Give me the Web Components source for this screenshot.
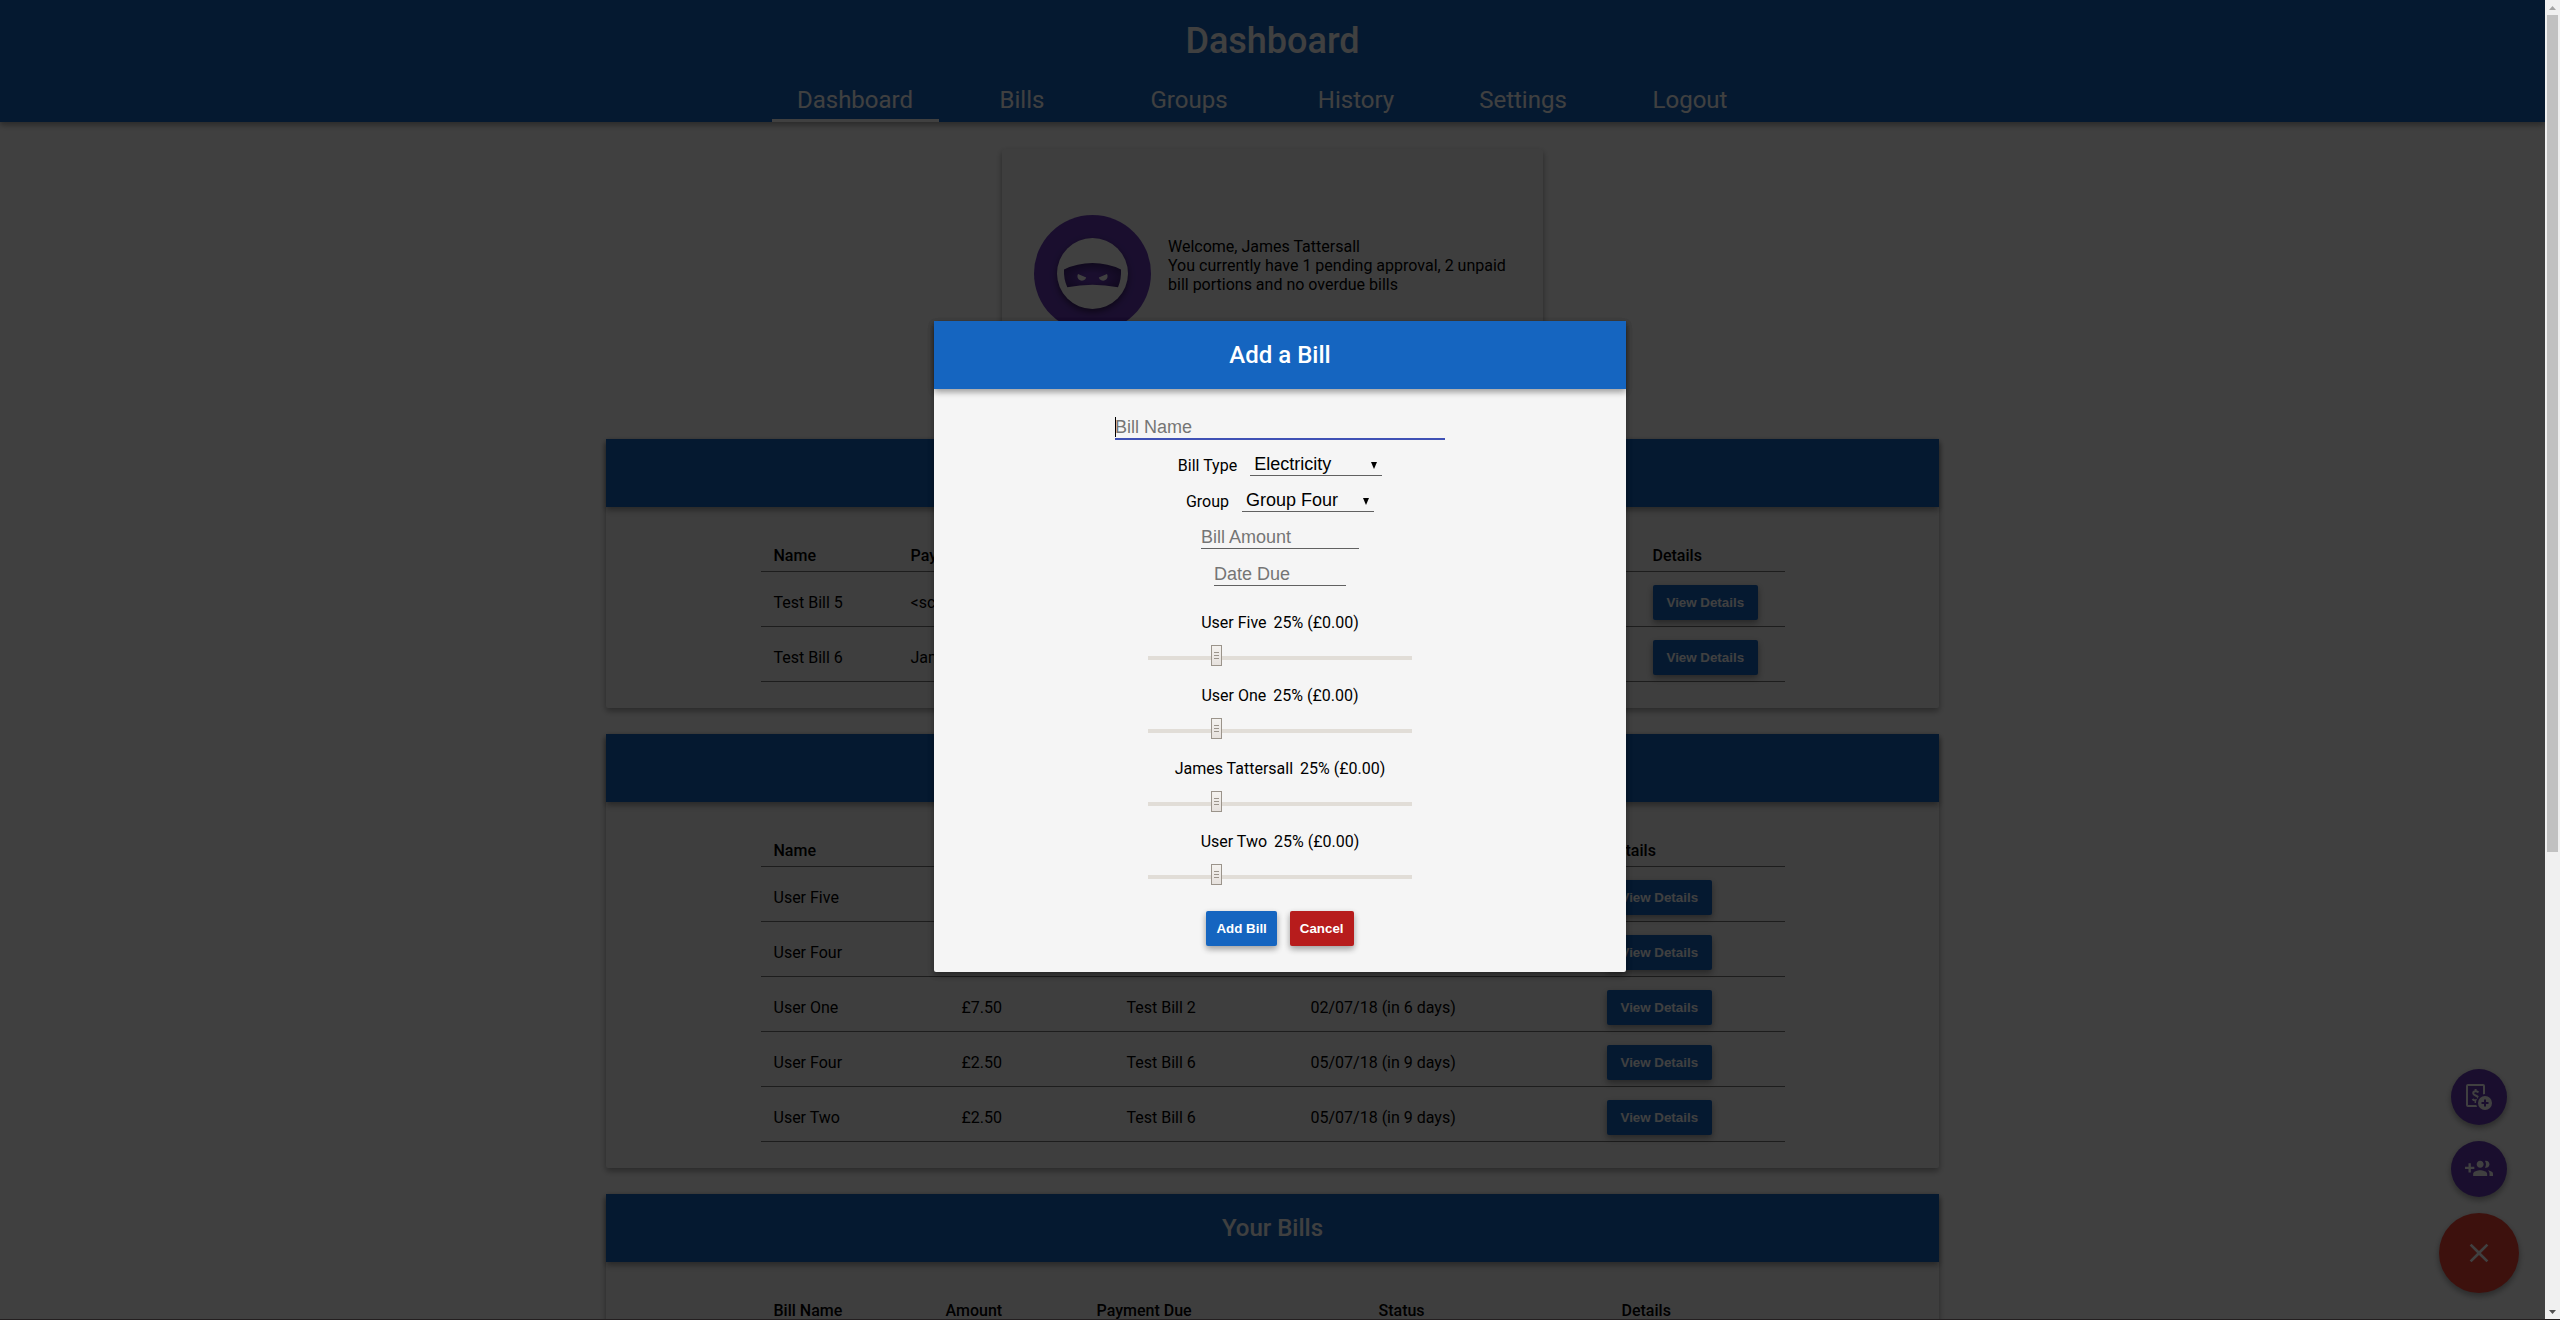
<!DOCTYPE html>
<html lang="en">
<head>
<meta charset="utf-8">
<title>Dashboard</title>
<style>
  body { margin: 0; background: #fff; color: #000; font: 16px/19px Roboto, sans-serif; }
</style>
</head>
<body>
<bill-app></bill-app>

<script>
const SHADOW = '0 3px 6px rgba(0,0,0,.16), 0 3px 6px rgba(0,0,0,.23)';
const BASE = `*, *::before, *::after { box-sizing: border-box; }`;

class Base extends HTMLElement {
  connectedCallback() {
    if (this.shadowRoot) return;
    this.attachShadow({ mode: 'open' }).innerHTML = `<style>${BASE}${this.css()}</style>${this.html()}`;
  }
  css() { return ''; }
  html() { return '<slot></slot>'; }
}

/* Top bar with title and navigation */
customElements.define('app-header', class extends Base {
  css() { return `
    :host { display: flex; flex-direction: column; align-items: center; gap: 24px; padding-top: 20px;
      background: #1565c0; color: #fff; box-shadow: ${SHADOW}; }
    h1 { margin: 0; font-size: 36px; line-height: 42px; font-weight: 500; }
    nav { display: flex; }
    a { width: 167px; padding-bottom: 5px; border-bottom: 3px solid transparent; color: inherit;
      font-size: 24px; line-height: 28px; text-align: center; text-decoration: none; }
    a[aria-current] { border-color: #fff; }`; }
  html() {
    const links = ['Dashboard', 'Bills', 'Groups', 'History', 'Settings', 'Logout'];
    return `<h1>Dashboard</h1><nav>${links.map((l, i) =>
      `<a href="#"${i ? '' : ' aria-current="page"'}>${l}</a>`).join('')}</nav>`;
  }
});

/* Greeting card */
customElements.define('welcome-card', class extends Base {
  css() { return `
    :host { display: flex; align-items: center; gap: 17px; width: 541px; max-width: 100%; padding: 66px 32px;
      background: #f5f5f5; border-radius: 2px; box-shadow: ${SHADOW}; }
    svg { flex: none; width: 117px; height: 117px; }
    .face { filter: drop-shadow(0 3px 3px rgba(0,0,0,.5)); }
    .text { padding-bottom: 16px; }`; }
  html() { return `
    <svg viewBox="0 0 117 117" aria-hidden="true">
      <defs><radialGradient id="m" cx=".5" cy=".6" r=".6"><stop offset=".3" stop-color="#673ab7"/><stop offset="1" stop-color="#3f2375"/></radialGradient></defs>
      <circle cx="58.5" cy="58.5" r="58.5" fill="#673ab7"/>
      <circle class="face" cx="58.5" cy="58.5" r="35.5" fill="#fff"/>
      <path d="M30 54.5Q43 48 58.5 48T87 54.5Q87.500 64 84 72.200Q71 69.700 58.500 69.700T33.300 72.200Q29.500 64 30 54.500Z" fill="url(#m)"/>
      <path d="M44 59L52.200 62.600A4.500 4.500 0 1 1 44 59ZM73 59L64.800 62.600A4.500 4.500 0 1 0 73 59Z" fill="#fff"/>
    </svg>
    <div class="text"><slot></slot></div>`; }
});

/* Titled card */
customElements.define('info-card', class extends Base {
  css() { return `
    :host { display: block; background: #f5f5f5; border-radius: 2px; box-shadow: ${SHADOW}; }
    h2 { margin: 0; height: 68px; background: #1565c0; color: #fff; box-shadow: ${SHADOW};
      font-size: 24px; line-height: 68px; font-weight: 500; text-align: center; }
    .body { display: flex; justify-content: center; padding: 25px 26px 26px; }`; }
  html() { return `<h2>${this.getAttribute('heading') || ''}</h2><div class="body"><slot></slot></div>`; }
});

/* Ruled table; the last column of each row holds a button */
const TABLES = {
  approvals: {
    widths: [150, 180, 180, 180, 202, 132],
    head: ['Name', 'Payee', '', '', '', 'Details'],
    rows: [['Test Bill 5', '&lt;script&gt;', '', '', ''], ['Test Bill 6', 'James', '', '', '']]
  },
  owed: {
    widths: [201, 165, 184, 296, 178],
    head: ['Name', '', '', '', 'Details'],
    rows: [['User Five', '', '', ''], ['User Four', '', '', ''],
      ['User One', '£7.50', 'Test Bill 2', '02/07/18 (in 6 days)'],
      ['User Four', '£2.50', 'Test Bill 6', '05/07/18 (in 9 days)'],
      ['User Two', '£2.50', 'Test Bill 6', '05/07/18 (in 9 days)']]
  },
  bills: {
    widths: [185, 151, 282, 243, 163],
    head: ['Bill Name', 'Amount', 'Payment Due', 'Status', 'Details'],
    rows: []
  }
};
customElements.define('bill-table', class extends Base {
  css() { return `
    :host { display: block; width: 100%; max-width: 1024px; }
    table { width: 100%; border-collapse: separate; border-spacing: 0; table-layout: fixed; }
    th, td { text-align: left; border-bottom: 1px solid #757575; padding: 13px 0 6px; white-space: nowrap; }
    th { height: 40px; font-weight: 500; vertical-align: bottom; }
    td { height: 55px; vertical-align: middle; }
    th:first-child, td:first-child { padding-left: 13px; }`; }
  html() {
    const t = TABLES[this.getAttribute('data')];
    const total = t.widths.reduce((a, b) => a + b);
    return `<table><colgroup>${t.widths.map(w => `<col style="width:calc(100% * ${w} / ${total})">`).join('')}</colgroup>
      <thead><tr>${t.head.map(h => `<th>${h}</th>`).join('')}</tr></thead>
      <tbody>${t.rows.map(r => `<tr>${r.map(c => `<td>${c}</td>`).join('')}<td><bill-button wide>View Details</bill-button></td></tr>`).join('')}</tbody></table>`;
  }
});

customElements.define('bill-button', class extends Base {
  css() { return `
    :host { display: block; }
    button { display: block; height: 35px; padding: 0 10px; border: 0; border-radius: 2px; background: #1565c0;
      color: #fff; font-family: "Liberation Sans", Arial, sans-serif; font-weight: bold; box-shadow: ${SHADOW}; }
    :host([wide]) button { padding: 0 14px; }
    :host([danger]) button { background: #b71c1c; }`; }
  html() { return `<button type="button"><slot></slot></button>`; }
});

/* Floating action buttons */
customElements.define('fab-stack', class extends Base {
  css() { return `
    :host { position: absolute; right: 26px; bottom: 26px; display: flex; flex-direction: column; align-items: center; gap: 16px; }
    button { display: grid; place-items: center; width: 56px; height: 56px; padding: 0; border: 0; border-radius: 50%;
      background: #673ab7; box-shadow: ${SHADOW}; }
    button.main { width: 80px; height: 80px; background: #f44336; }
    svg { width: 28px; height: 28px; fill: #fff; }
    .main svg { width: 32px; height: 32px; }`; }
  html() { return `
    <button type="button" aria-label="Add bill"><svg viewBox="0 0 28 28">
      <rect x="2" y="2" width="17" height="21" rx="1" fill="none" stroke="#fff" stroke-width="2"/>
      <path d="M13.300 9.500C12.600 7.800 8.200 7.600 8.200 10.200C8.200 13 13.200 12 13.200 15.200C13.200 18 8.400 17.800 7.700 15.800M10.600 6V8M10.600 17.500V20" fill="none" stroke="#fff" stroke-width="2"/>
      <circle cx="20" cy="20" r="9" fill="#673ab7"/><circle cx="20" cy="20" r="7"/>
      <path d="M20 16.500V23.500M16.500 20H23.500" stroke="#673ab7" stroke-width="2"/></svg></button>
    <button type="button" aria-label="Add group"><svg viewBox="0 0 24 24"><path d="M8 10H5V7H3v3H0v2h3v3h2v-3h3v-2zm10 1c1.660 0 2.990-1.340 2.990-3S19.660 5 18 5c-.320 0-.630.050-.910.140.570.810.900 1.790.900 2.860s-.340 2.040-.900 2.860c.280.090.590.140.910.140zm-5 0c1.660 0 2.990-1.340 2.990-3S14.660 5 13 5c-1.660 0-3 1.340-3 3s1.340 3 3 3zm6.620 2.160c.830.730 1.380 1.660 1.380 2.840v2h3v-2c0-1.540-2.370-2.490-4.380-2.840zM13 13c-2 0-6 1-6 3v2h12v-2c0-2-4-3-6-3z"/></svg></button>
    <button type="button" class="main" aria-label="Close"><svg viewBox="0 0 24 24"><path d="M19 6.410L17.590 5 12 10.590 6.410 5 5 6.410 10.590 12 5 17.590 6.410 19 12 13.410 17.590 19 19 17.590 13.410 12z"/></svg></button>`; }
});

/* One share slider */
customElements.define('share-slider', class extends Base {
  css() { return `
    :host { display: flex; flex-direction: column; align-items: center; gap: 13px; }
    .label { display: flex; gap: 7px; }
    input { appearance: none; display: block; width: 264px; height: 21px; margin: 0; background: none; }
    input::-webkit-slider-runnable-track { height: 21px;
      background: linear-gradient(#e1ddd7, #e1ddd7) no-repeat 0 11px / 100% 4px; }
    input::-webkit-slider-thumb { appearance: none; width: 11px; height: 21px; border: 1px solid #9b948b;
      background:
        linear-gradient(#9b948b, #9b948b) no-repeat 2px 6px / 5px 1px,
        linear-gradient(#9b948b, #9b948b) no-repeat 2px 9px / 5px 1px,
        linear-gradient(#9b948b, #9b948b) no-repeat 2px 12px / 5px 1px,
        linear-gradient(#f4f2ef, #e6e1dd); }`; }
  html() { return `<div class="label"><label for="r">${this.getAttribute('name')}</label><output for="r">25% (£0.00)</output></div>
    <input id="r" type="range" min="0" max="100" value="25">`; }
});

/* Labelled drop-down */
customElements.define('select-field', class extends Base {
  css() { return `
    :host { display: flex; align-items: center; gap: 13px; height: 22px; }
    .box { display: grid; align-items: center; width: 132px; }
    select, svg { grid-area: 1 / 1; }
    select { appearance: none; width: 100%; height: 22px; padding: 0 4px; border: 0; border-bottom: 1px solid #616161;
      border-radius: 0; background: none; color: #000; font: 18px/21px "Liberation Sans", Arial, sans-serif; }
    svg { justify-self: end; width: 6px; height: 7px; margin-right: 5px; pointer-events: none; }`; }
  html() { return `<label for="s">${this.getAttribute('label')}</label>
    <div class="box"><select id="s"><option>${this.getAttribute('value')}</option></select>
    <svg viewBox="0 0 6 7"><path d="M0 0H6L3 7Z"/></svg></div>`; }
});

/* Modal */
customElements.define('add-bill-dialog', class extends Base {
  css() { return `
    :host { display: block; width: 692px; max-width: 100%; background: #f5f5f5; border-radius: 2px;
      box-shadow: ${SHADOW}; }
    h2 { margin: 0; height: 68px; background: #1565c0; color: #fff; box-shadow: ${SHADOW};
      font-size: 24px; line-height: 68px; font-weight: 500; text-align: center; }
    form { display: flex; flex-direction: column; align-items: center; padding: 28px 26px 26px; }
    .fields { display: flex; flex-direction: column; align-items: center; gap: 14px; }
    .shares { display: flex; flex-direction: column; gap: 20px; padding: 27px 0 26px; }
    .actions { display: flex; gap: 13px; }
    input { width: 132px; height: 23px; padding: 0; border: 0; border-bottom: 1px solid #616161; outline: 0;
      background: none; font: 18px/21px "Liberation Sans", Arial, sans-serif; }
    input::placeholder { color: #757575; }
    .amount { width: 158px; }
    .name { width: 330px; border-bottom: 2px solid #3f51b5; caret-color: transparent;
      background: linear-gradient(#000, #000) no-repeat 0 0 / 1px 20px; }`; }
  html() { return `<h2>Add a Bill</h2>
    <form>
      <div class="fields">
        <input class="name" type="text" placeholder="Bill Name" aria-label="Bill Name">
        <select-field label="Bill Type" value="Electricity"></select-field>
        <select-field label="Group" value="Group Four"></select-field>
        <input class="amount" type="text" inputmode="decimal" placeholder="Bill Amount" aria-label="Bill Amount">
        <input type="text" placeholder="Date Due" aria-label="Date Due">
      </div>
      <div class="shares">
        <share-slider name="User Five"></share-slider>
        <share-slider name="User One"></share-slider>
        <share-slider name="James Tattersall"></share-slider>
        <share-slider name="User Two"></share-slider>
      </div>
      <div class="actions"><bill-button>Add Bill</bill-button><bill-button danger>Cancel</bill-button></div>
    </form>`; }
});

/* Scrollbar gutter */
customElements.define('scroll-gutter', class extends Base {
  css() { return `
    :host { display: grid; grid-template-rows: 15px 1fr 15px; justify-items: center; align-items: center; background: #f0f0f0; }
    svg { width: 7px; height: 4px; }
    .thumb { align-self: start; width: 11px; height: 64.9%; background: #c1c1c1; }`; }
  html() { return `<svg viewBox="0 0 7 4"><path d="M0 4H7L3.500 0Z" fill="#a3a3a3"/></svg><div class="thumb"></div>
    <svg viewBox="0 0 7 4"><path d="M0 0H7L3.500 4Z" fill="#505050"/></svg>`; }
});

customElements.define('bill-app', class extends Base {
  css() { return `
    :host { position: relative; box-sizing: border-box; display: grid; grid-template-columns: 1fr 15px; height: 100vh; overflow: hidden;
      border-bottom: 1px solid #231f20; }
    .page { position: relative; min-width: 0; min-height: 0; overflow: hidden; }
    main { display: flex; flex-direction: column; align-items: center; padding: 27px 26px; }
    .cards { display: flex; flex-direction: column; gap: 26px; width: 100%; max-width: 1333px; margin-top: 41px; }
    .scrim { position: absolute; inset: 0; background: rgba(0,0,0,.75); }
    .layer { position: absolute; inset: 0; display: flex; align-items: center; justify-content: center; padding-bottom: 26px; }`; }
  html() { return `
    <div class="page">
      <app-header></app-header>
      <main>
        <welcome-card>Welcome, James Tattersall<br>You currently have 1 pending approval, 2 unpaid bill portions and no overdue bills</welcome-card>
        <div class="cards">
          <info-card><bill-table data="approvals"></bill-table></info-card>
          <info-card><bill-table data="owed"></bill-table></info-card>
          <info-card heading="Your Bills"><bill-table data="bills"></bill-table></info-card>
        </div>
      </main>
      <fab-stack></fab-stack>
      <div class="scrim"></div>
    </div>
    <scroll-gutter></scroll-gutter>
    <div class="layer"><add-bill-dialog></add-bill-dialog></div>`; }
});
</script>
</body>
</html>
